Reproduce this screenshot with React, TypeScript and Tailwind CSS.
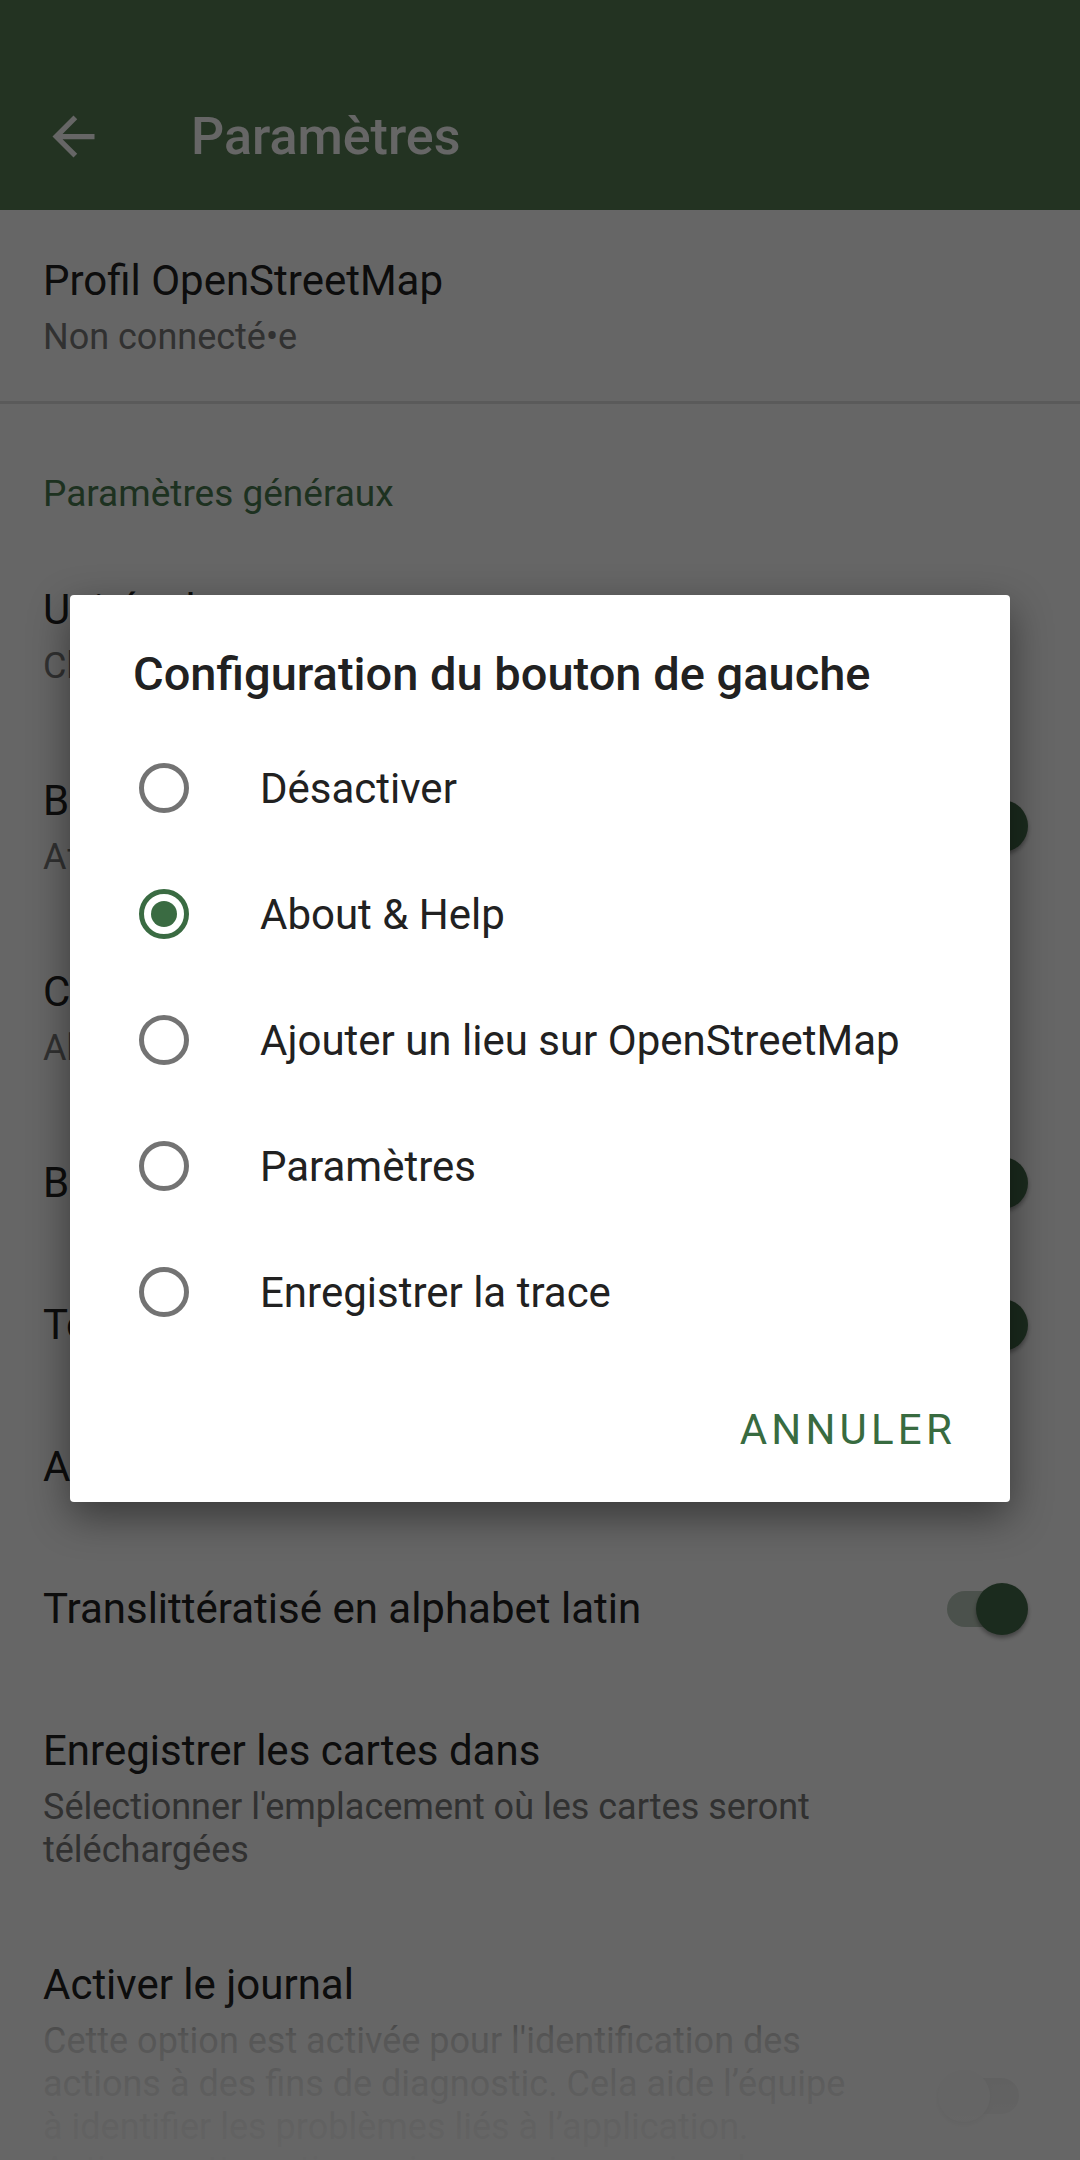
import React from 'react';

type Pref = {
  title: string;
  summary?: string;
  toggle?: 'on' | 'off';
};

const general: Pref[] = [
  { title: 'Unités de mesure', summary: 'Choisissez entre kilomètres et miles' },
  { title: 'Boutons de zoom', summary: "Afficher sur l'écran", toggle: 'on' },
  { title: 'Configuration du bouton de gauche', summary: 'About & Help' },
  { title: 'Bâtiments en 3D', toggle: 'on' },
  { title: 'Tourner la carte', toggle: 'on' },
  { title: 'Autozoom' },
  { title: 'Translittératisé en alphabet latin', toggle: 'on' },
  {
    title: 'Enregistrer les cartes dans',
    summary: "Sélectionner l'emplacement où les cartes seront téléchargées",
  },
  {
    title: 'Activer le journal',
    summary:
      "Cette option est activée pour l'identification des actions à des fins de diagnostic. Cela aide l’équipe à identifier les problèmes liés à l’application. Activez cette option uniquement pour signaler un problème à l'équipe.",
    toggle: 'off',
  },
];

const options = [
  'Désactiver',
  'About & Help',
  'Ajouter un lieu sur OpenStreetMap',
  'Paramètres',
  'Enregistrer la trace',
];

function Toggle({ on }: { on: boolean }) {
  return (
    <div className={`relative w-[90px] h-[52px] flex items-center ${on ? 'justify-end' : 'justify-start'}`}>
      <div className={`absolute left-[9px] right-[9px] h-[36px] rounded-full ${on ? 'bg-[#bccbbd]' : 'bg-[#bdbdbd]'}`} />
      <div
        className={`relative w-[52px] h-[52px] rounded-full shadow-[0_3px_4px_rgba(0,0,0,0.35)] ${
          on ? 'bg-[#446c4b]' : 'bg-[#f1f1f1]'
        }`}
      />
    </div>
  );
}

function PrefRow({ pref }: { pref: Pref }) {
  return (
    <div className="flex items-center pl-[43px] pr-[52px] py-[42px]">
      <div className="flex-1 mr-[78px]">
        <div className="text-[42px] leading-[58px] text-[#212121]">{pref.title}</div>
        {pref.summary && (
          <div className="mt-[6px] text-[36px] leading-[43px] text-[#7a7a7a]">{pref.summary}</div>
        )}
      </div>
      <div className="w-[90px] flex justify-end">
        {pref.toggle && <Toggle on={pref.toggle === 'on'} />}
      </div>
    </div>
  );
}

function Radio({ checked }: { checked: boolean }) {
  return (
    <div
      className={`w-[50px] h-[50px] rounded-full border-[5px] flex items-center justify-center ${
        checked ? 'border-[#3a6b42]' : 'border-[#737373]'
      }`}
    >
      {checked && <div className="w-[26px] h-[26px] rounded-full bg-[#3a6b42]" />}
    </div>
  );
}

export default function App() {
  return (
    <div className="relative w-[1080px] h-[2160px] overflow-hidden bg-white font-['Roboto',sans-serif]">
      {/* barre d'outils */}
      <div className="h-[210px] bg-[#588055] pt-[63px]">
        <div className="h-[147px] flex items-center">
          <svg viewBox="0 0 24 24" className="ml-[42px] w-[63px] h-[63px] fill-white">
            <path d="M20 11H7.83l5.59-5.59L12 4l-8 8 8 8 1.41-1.41L7.83 13H20v-2z" />
          </svg>
          <div className="ml-[86px] text-[52px] font-medium text-white leading-none">Paramètres</div>
        </div>
      </div>

      <PrefRow pref={{ title: 'Profil OpenStreetMap', summary: 'Non connecté•e' }} />
      <div className="h-[3px] bg-[#e2e2e2]" />

      <div className="pl-[43px] pt-[68px] pb-[24px] text-[37px] leading-[43px] text-[#4a7c50]">
        Paramètres généraux
      </div>

      {general.map((p) => (
        <PrefRow key={p.title} pref={p} />
      ))}

      {/* fondu en bas de la liste */}
      <div className="absolute left-0 right-0 bottom-0 h-[158px] pointer-events-none bg-[linear-gradient(to_bottom,rgba(255,255,255,0)_0%,rgba(255,255,255,0.7)_22%,rgba(255,255,255,0.86)_60%,rgba(255,255,255,0.97)_100%)]" />

      {/* fond assombri + dialogue */}
      <div className="absolute inset-0 bg-black/60 flex items-center justify-center pb-[63px]">
        <div className="w-[940px] bg-white rounded-[4px] shadow-[0_14px_40px_rgba(0,0,0,0.45)]">
          <div className="pt-[47px] px-[63px] text-[47px] leading-[64px] font-medium text-[#212121]">
            Configuration du bouton de gauche
          </div>
          <div className="mt-[19px]">
            {options.map((o, i) => (
              <div key={o} className="h-[126px] flex items-center pl-[69px]">
                <Radio checked={i === 1} />
                <span className="ml-[71px] text-[42px] text-[#212121]">{o}</span>
              </div>
            ))}
          </div>
          <div className="flex justify-end pt-[54px] pb-[51px] pr-[54px]">
            <button className="text-[42px] leading-[42px] tracking-[0.1em] text-[#386b40]">
              ANNULER
            </button>
          </div>
        </div>
      </div>
    </div>
  );
}
